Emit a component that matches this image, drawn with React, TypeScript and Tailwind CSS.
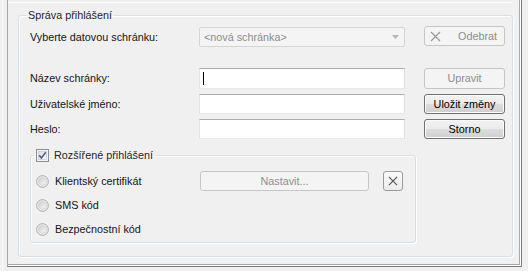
import React from "react";

const btnDisabled =
  "h-[20px] rounded-[3px] border border-[#c4c6c8] bg-[#f4f4f4] text-[#8d8d8d] flex items-center justify-center";
const btnEnabled =
  "h-[20px] rounded-[3px] border border-[#707070] bg-[linear-gradient(to_bottom,#f2f2f2_0%,#ebebeb_50%,#dddddd_50%,#cfcfcf_100%)] text-black flex items-center justify-center shadow-[inset_0_0_0_1px_#fbfbfb]";
const inputCls =
  "h-full w-[206px] bg-white border border-[#abadb3] border-b-[#e3e9ef] border-l-[#e2e3ea] border-r-[#dbdfe6]";

function XIcon({ color, size = 11 }: { color: string; size?: number }) {
  return (
    <svg width={size} height={size} viewBox="0 0 11 11">
      <path d="M1 1 L10 10 M10 1 L1 10" stroke={color} strokeWidth="1.3" />
    </svg>
  );
}

function Radio() {
  return (
    <svg width="13" height="13" viewBox="0 0 13 13" className="shrink-0">
      <defs>
        <linearGradient id="rg" x1="0" y1="0" x2="1" y2="1">
          <stop offset="0" stopColor="#cfcfcf" />
          <stop offset="1" stopColor="#f7f7f7" />
        </linearGradient>
      </defs>
      <circle cx="6.5" cy="6.5" r="5.8" fill="#f4f4f4" stroke="#a7a7a7" strokeWidth="1" />
      <circle cx="6.5" cy="6.5" r="4" fill="url(#rg)" stroke="#cccccc" strokeWidth="0.7" />
    </svg>
  );
}

function Checkbox() {
  return (
    <svg width="13" height="13" viewBox="0 0 13 13" className="shrink-0">
      <defs>
        <linearGradient id="cg" x1="0" y1="0" x2="1" y2="1">
          <stop offset="0" stopColor="#dcdcdc" />
          <stop offset="1" stopColor="#fbfbfb" />
        </linearGradient>
      </defs>
      <rect x="0.5" y="0.5" width="12" height="12" fill="#f4f4f4" stroke="#8e8f8f" />
      <rect x="2.5" y="2.5" width="8" height="8" fill="url(#cg)" stroke="#bfbfbf" strokeWidth="0.6" />
      <path d="M3.2 6.4 L5.4 8.9 L9.8 3.3" fill="none" stroke="#4a5d95" strokeWidth="1.6" />
    </svg>
  );
}

export default function App() {
  return (
    <div className="w-[528px] h-[271px] bg-[#f0f0f0] overflow-hidden flex font-['Liberation_Sans',Arial,sans-serif] text-[10.8px] leading-[13px] text-[#141414]">
      <div className="w-[2px] shrink-0" />
      <div className="w-px h-full bg-[#fbfbfb] shrink-0" />
      <div className="w-[4px] shrink-0" />
      {/* tab page frame */}
      <div className="w-[515px] h-[267px] shrink-0 bg-white border-l border-r border-b border-l-[#a8a8a8] border-r-[#7b7b7b] border-b-[#7b7b7b]">
        <div className="w-[512px] h-[265px] bg-[#f0f0f0] border-r border-b border-[#a9a9a9]">
          <div className="h-[3px] border-b border-[#fafcfd] mr-[6px]" />
          <fieldset className="mt-[5px] ml-[10px] w-[495px] h-[249px] border border-[#d5dfe5] rounded-[3px] shadow-[inset_1px_1px_0_#ffffff,1px_1px_0_#ffffff] pl-[11px] pt-[5px]">
            <legend className="-ml-[4px] px-[2px] leading-[14px] text-[#1e1e1e]">Správa přihlášení</legend>

            {/* row 1 */}
            <div className="flex items-start h-[21px]">
              <div className="w-[169px] h-[20px] flex items-center">Vyberte datovou schránku:</div>
              <div className="w-[206px] h-[20px] rounded-[2px] border border-[#d5d5d5] bg-[#f4f4f4] flex items-center pl-[4px] pr-[5px] text-[#8d8d8d]">
                <span className="flex-1">&lt;nová schránka&gt;</span>
                <svg width="7" height="4" viewBox="0 0 7 4">
                  <path d="M0 0 H7 L3.5 4 Z" fill="#b5b5b5" />
                </svg>
              </div>
              <div className={`ml-[19px] w-[81px] -mt-px ${btnDisabled} justify-start pl-[5px]`}>
                <XIcon color="#9a9a9a" />
                <span className="ml-[17px]">Odebrat</span>
              </div>
            </div>

            {/* row 2 */}
            <div className="flex items-stretch h-[21px] mt-[20px]">
              <div className="w-[169px] flex items-center">Název schránky:</div>
              <div className={`${inputCls} flex items-center pl-[3px]`}>
                <div className="w-px h-[13px] bg-black" />
              </div>
              <div className={`ml-[19px] w-[81px] ${btnDisabled} h-[21px]`}>Upravit</div>
            </div>

            {/* row 3 */}
            <div className="flex items-stretch h-[20px] mt-[5px]">
              <div className="w-[169px] flex items-center">Uživatelské jméno:</div>
              <div className={inputCls} />
              <div className={`ml-[19px] w-[81px] ${btnEnabled}`}>Uložit změny</div>
            </div>

            {/* row 4 */}
            <div className="flex items-stretch h-[20px] mt-[5px]">
              <div className="w-[169px] flex items-center">Heslo:</div>
              <div className={inputCls} />
              <div className={`ml-[19px] w-[81px] ${btnEnabled}`}>Storno</div>
            </div>

            {/* extended login group */}
            <fieldset className="mt-[9px] w-[386px] h-[95px] border border-[#d5dfe5] rounded-[3px] shadow-[inset_1px_1px_0_#ffffff,1px_1px_0_#ffffff] pl-[5px] pt-[9px]">
              <legend className="-ml-[2px] px-[2px] leading-[14px] flex items-center">
                <Checkbox />
                <span className="ml-[5px] text-[#1e1e1e]">Rozšířené přihlášení</span>
              </legend>

              <div className="flex items-center h-[20px]">
                <div className="w-[164px] flex items-center">
                  <Radio />
                  <span className="ml-[6px]">Klientský certifikát</span>
                </div>
                <div className={`w-[169px] ${btnDisabled}`}>Nastavit...</div>
                <div className="ml-[14px] w-[20px] h-[20px] rounded-[3px] border border-[#9a9a9a] bg-[linear-gradient(to_bottom,#fafafa,#ececec)] flex items-center justify-center">
                  <XIcon color="#555555" size={10} />
                </div>
              </div>
              <div className="flex items-center h-[20px] mt-[4px]">
                <Radio />
                <span className="ml-[6px]">SMS kód</span>
              </div>
              <div className="flex items-center h-[20px] mt-[4px]">
                <Radio />
                <span className="ml-[6px]">Bezpečnostní kód</span>
              </div>
            </fieldset>
          </fieldset>
        </div>
      </div>
    </div>
  );
}
